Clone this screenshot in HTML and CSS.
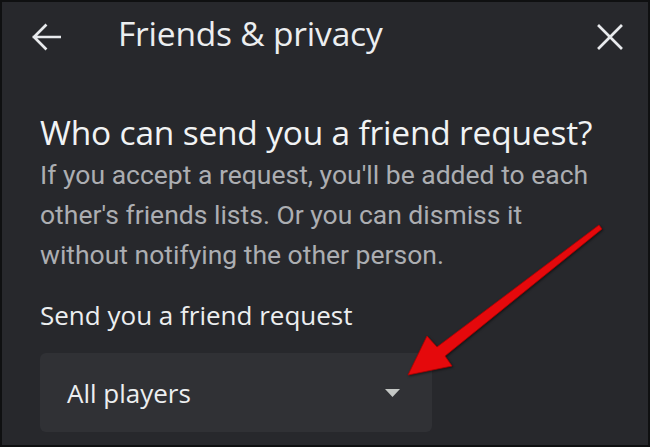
FILE: index.html
```html
<!DOCTYPE html>
<html>
<head>
<meta charset="utf-8">
<link rel="stylesheet" href="styles.css">
</head>
<body>
<div class="screen">
  <header class="topbar">
    <svg class="icon back" viewBox="0 0 30 30" width="30" height="30"><path d="M3 15H29M14.5 3.5L3 15L14.5 26.5" fill="none" stroke="#e8eaed" stroke-width="2.7" stroke-linecap="square"/></svg>
    <span class="title">Friends &amp; privacy</span>
    <svg class="icon close" viewBox="0 0 30 30" width="30" height="30"><path d="M4 4L26 26M26 4L4 26" fill="none" stroke="#e8eaed" stroke-width="2.7" stroke-linecap="square"/></svg>
  </header>
  <main class="content">
    <h1 class="heading">Who can send you a friend request?</h1>
    <p class="desc">If you accept a request, you'll be added to each other's friends lists. Or you can dismiss it without notifying the other person.</p>
    <div class="label">Send you a friend request</div>
    <div class="select">
      <span class="value">All players</span>
      <svg class="caret" viewBox="0 0 15 8" width="15" height="8"><path d="M0 0h15L7.5 8z" fill="#c4c7c5"/></svg>
    </div>
  </main>
  <svg class="pointer" viewBox="0 0 650 447" width="650" height="447">
    <polygon points="408,375 427,336 437,347 599,225 602,229 445,356 452,366" fill="#e5090c" stroke="#b00000" stroke-width="0.8" stroke-linejoin="round"/>
  </svg>
</div>
</body>
</html>
```
FILE: styles.css
```css
html, body {
  margin: 0;
  padding: 0;
}
body {
  background: #27282c;
  width: 650px;
  height: 447px;
  overflow: hidden;
}
.screen {
  position: relative;
  box-sizing: border-box;
  width: 650px;
  height: 447px;
  border: 2px solid #0f1011;
  background: #27282c;
  font-family: "Roboto", "Liberation Sans", sans-serif;
}
.topbar {
  display: flex;
  align-items: center;
  height: 70px;
  padding: 0 23px 0 29px;
}
.back,
.close {
  display: block;
  flex: none;
}
.title {
  flex: 1;
  margin-left: 57px;
  padding-bottom: 8px;
  font-family: "Open Sans", sans-serif;
  font-size: 33.5px;
  line-height: 38px;
  color: #eceef0;
  letter-spacing: -0.2px;
}
.content {
  padding: 0 38px;
}
.heading {
  margin: 37px 0 0;
  font-family: "Open Sans", sans-serif;
  font-weight: 400;
  font-size: 33.5px;
  line-height: 46px;
  color: #f1f3f4;
  letter-spacing: -0.2px;
  white-space: nowrap;
}
.desc {
  margin: 0;
  width: 560px;
  font-size: 26.5px;
  line-height: 40px;
  color: #acaeb2;
}
.label {
  margin-top: 24px;
  font-family: "Open Sans", sans-serif;
  font-size: 26px;
  line-height: 32px;
  color: #eceef0;
}
.select {
  margin-top: 22px;
  width: 392px;
  height: 79px;
  box-sizing: border-box;
  background: #303135;
  border-radius: 6px;
  display: flex;
  align-items: center;
  padding: 0 32px 0 27px;
}
.value {
  flex: 1;
  font-family: "Open Sans", sans-serif;
  font-size: 26px;
  color: #eceef0;
}
.caret {
  display: block;
}
.pointer {
  position: absolute;
  left: -2px;
  top: -2px;
  pointer-events: none;
  filter: drop-shadow(1px 1px 1px rgba(0,0,0,0.5));
}
```
